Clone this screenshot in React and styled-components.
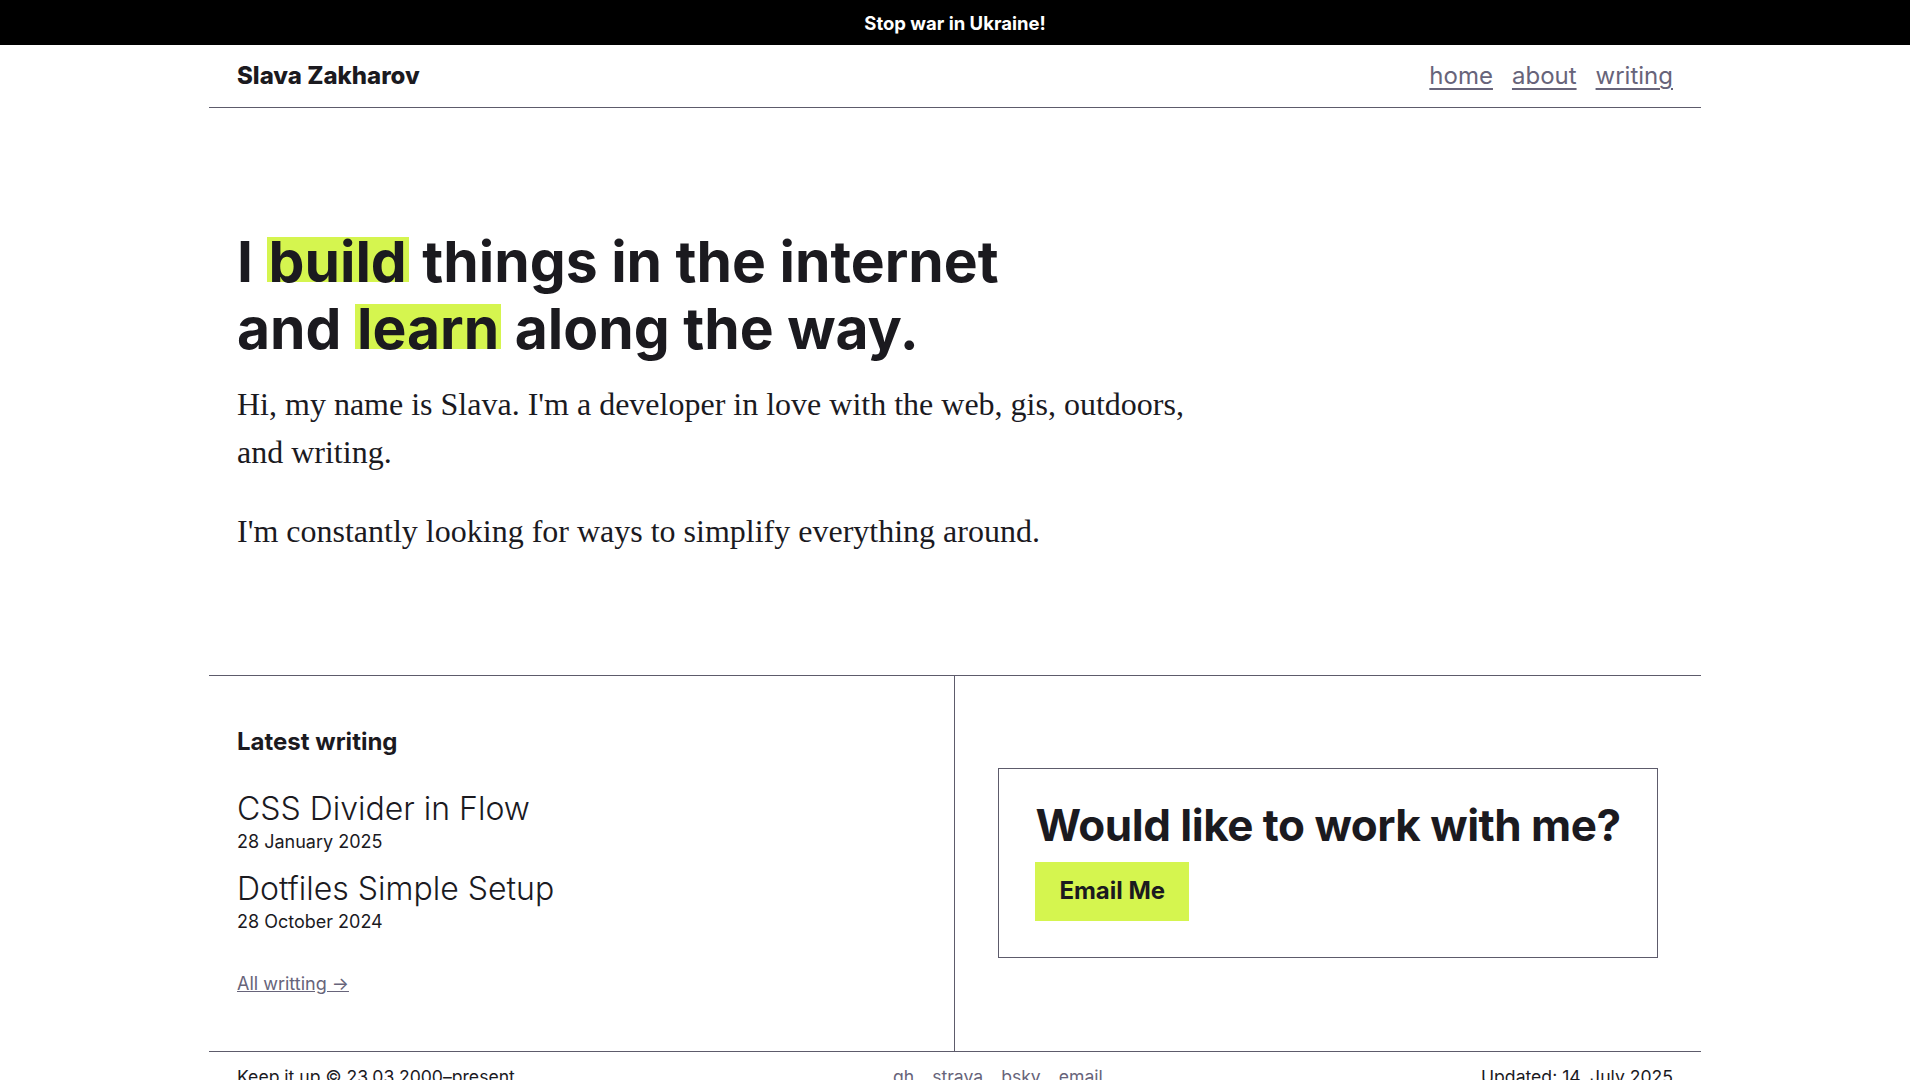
import React from 'react';
import styled, { createGlobalStyle } from 'styled-components';

const GlobalStyle = createGlobalStyle`
    * {
        box-sizing: border-box;
    }
    body {
        margin: 0 10px 0 0;
        background: #fff;
        color: #1b1a1f;
        font-family: Inter, "Noto Sans", sans-serif;
    }
`;

const lime = '#d5f54f';
const line = '#5d5b6b';
const muted = '#67647a';

const Banner = styled.div`
    background: #000;
    color: #fff;
    height: 45px;
    display: flex;
    align-items: center;
    justify-content: center;
    font-weight: 700;
    font-size: 18.5px;
`;

const Page = styled.div`
    width: 1492px;
    margin: 0 auto;
`;

const Header = styled.header`
    display: flex;
    align-items: center;
    justify-content: space-between;
    padding: 13px 28px;
    border-bottom: 1px solid ${line};
    line-height: 36px;
`;

const Logo = styled.a`
    font-size: 24px;
    font-weight: 800;
    color: #1b1a1f;
    text-decoration: none;
`;

const Nav = styled.nav`
    display: flex;
    gap: 19px;
    a {
        font-size: 24px;
        color: ${muted};
        text-decoration: underline;
        text-underline-offset: 4px;
    }
`;

const Hero = styled.section`
    padding: 120px 28px 120px;
    border-bottom: 1px solid ${line};
`;

const Heading = styled.h1`
    margin: 0 0 17px;
    font-size: 57px;
    font-weight: 700;
    line-height: 1.18;
`;

const Mark = styled.span`
    padding: 0 2px;
    background: linear-gradient(
        to bottom,
        transparent 15%,
        ${lime} 15%,
        ${lime} 80%,
        transparent 80%
    );
`;

const Lead = styled.p`
    max-width: 960px;
    margin: 0 0 31px;
    font-family: "Liberation Serif", "Times New Roman", serif;
    font-size: 32px;
    line-height: 1.5;
    &:last-child {
        margin-bottom: 0;
    }
`;

const Split = styled.section`
    display: grid;
    grid-template-columns: 1fr 1fr;
    border-bottom: 1px solid ${line};
`;

const Writing = styled.div`
    padding: 52px 28px 54px;
    border-right: 1px solid ${line};
`;

const SectionTitle = styled.h2`
    margin: 0 0 34px;
    font-size: 24px;
    font-weight: 700;
    line-height: 1.2;
`;

const Post = styled.div`
    margin-bottom: ${(p) => (p.$last ? '36px' : '16px')};
`;

const PostTitle = styled.a`
    display: block;
    font-size: 32px;
    font-weight: 300;
    line-height: 1.2;
    color: #1b1a1f;
    text-decoration: none;
`;

const PostDate = styled.div`
    font-size: 18px;
    line-height: 1.42;
`;

const MoreLink = styled.a`
    font-size: 18px;
    line-height: 1.5;
    color: ${muted};
    text-decoration: underline;
`;

const Contact = styled.div`
    display: flex;
    align-items: center;
    justify-content: center;
`;

const ContactBox = styled.div`
    border: 1px solid ${line};
    padding: 34px 36px 36px;
`;

const ContactTitle = styled.h2`
    margin: 0 0 15px;
    font-size: 44px;
    font-weight: 700;
    line-height: 1;
    letter-spacing: -0.5px;
`;

const EmailButton = styled.a`
    display: inline-block;
    background: ${lime};
    color: #1b1a1f;
    font-size: 24px;
    font-weight: 700;
    line-height: 1.2;
    padding: 15px 24px;
    text-decoration: none;
`;

const Footer = styled.footer`
    display: flex;
    justify-content: space-between;
    align-items: center;
    padding: 12px 28px;
    font-size: 17.6px;
    line-height: 1.5;
`;

const Social = styled.div`
    display: flex;
    gap: 18px;
    a {
        color: ${muted};
        text-decoration: none;
    }
`;

const posts = [
    { title: 'CSS Divider in Flow', date: '28 January 2025' },
    { title: 'Dotfiles Simple Setup', date: '28 October 2024' },
];

const App = () => {
    return (
        <>
            <GlobalStyle />
            <Banner>Stop war in Ukraine!</Banner>
            <Page>
                <Header>
                    <Logo href="#">Slava Zakharov</Logo>
                    <Nav>
                        <a href="#">home</a>
                        <a href="#">about</a>
                        <a href="#">writing</a>
                    </Nav>
                </Header>

                <Hero>
                    <Heading>
                        I <Mark>build</Mark> things in the internet
                        <br />
                        and <Mark>learn</Mark> along the way.
                    </Heading>
                    <Lead>
                        Hi, my name is Slava. I'm a developer in love with the web, gis,
                        outdoors, and writing.
                    </Lead>
                    <Lead>I'm constantly looking for ways to simplify everything around.</Lead>
                </Hero>

                <Split>
                    <Writing>
                        <SectionTitle>Latest writing</SectionTitle>
                        {posts.map((post, i) => (
                            <Post key={i} $last={i === posts.length - 1}>
                                <PostTitle href="#">{post.title}</PostTitle>
                                <PostDate>{post.date}</PostDate>
                            </Post>
                        ))}
                        <MoreLink href="#">All writting →</MoreLink>
                    </Writing>
                    <Contact>
                        <ContactBox>
                            <ContactTitle>Would like to work with me?</ContactTitle>
                            <EmailButton href="#">Email Me</EmailButton>
                        </ContactBox>
                    </Contact>
                </Split>

                <Footer>
                    <span>Keep it up © 23.03.2000–present</span>
                    <Social>
                        <a href="#">gh</a>
                        <a href="#">strava</a>
                        <a href="#">bsky</a>
                        <a href="#">email</a>
                    </Social>
                    <span>Updated: 14. July 2025</span>
                </Footer>
            </Page>
        </>
    );
};

export default App;
